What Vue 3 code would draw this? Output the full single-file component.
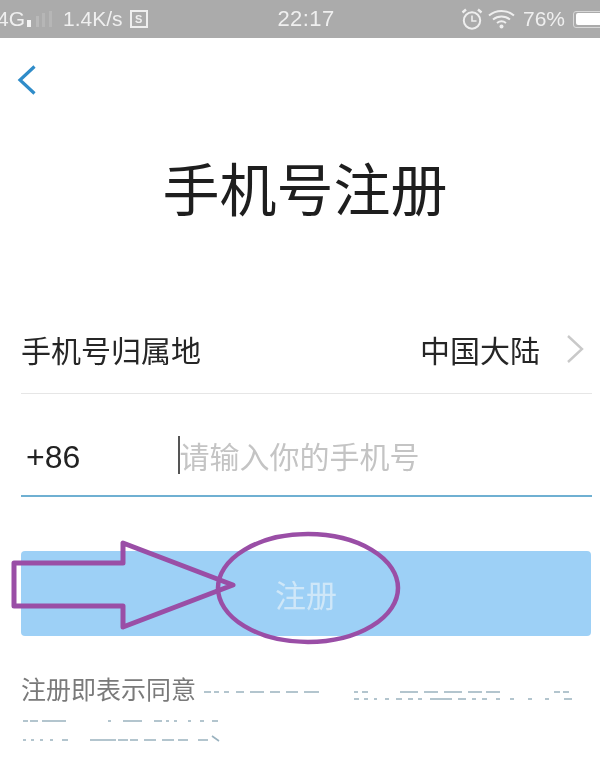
<script setup>
const footerDashes = [
  'M204 692h7M214 692h5M224 692h5M236 692h8M250 692h14M270 692h10M286 692h12M304 692h15M354 692h4M362 692h6M400 692h18M424 692h14M444 692h18M468 692h14M486 692h14M554 692h6M563 692h6',
  'M354 699h5M364 699h4M374 699h3M385 699h4M396 699h6M408 699h5M418 699h4M430 699h22M458 699h8M472 699h4M482 699h5M496 699h4M510 699h4M528 699h4M545 699h4M564 699h8',
  'M23 721h5M30 721h8M42 721h24M108 721h3M123 721h19M154 721h8M166 721h3M174 721h3M188 721h3M200 721h4M212 721h6',
  'M23 740h3M31 740h3M40 740h3M50 740h3M62 740h6M90 740h26M118 740h10M130 740h8M144 740h12M162 740h12M178 740h10M198 740h10M212 736l7 5'
]
</script>

<template>
  <div class="screen">
    <header class="status">
      <div class="status-left">
        <span class="net">4G</span>
        <svg class="signal" width="26" height="16" viewBox="0 0 26 16" aria-hidden="true">
          <rect x="0" y="9" width="4" height="7" fill="#f4f4f4" />
          <rect x="9" y="5" width="3" height="11" fill="#b9b9b9" />
          <rect x="15" y="2" width="3" height="14" fill="#b6b6b6" />
          <rect x="22" y="0" width="3" height="16" fill="#b6b6b6" />
        </svg>
        <span class="speed">1.4K/s</span>
        <span class="s-box">S</span>
      </div>
      <span class="clock">22:17</span>
      <div class="status-right">
        <svg width="22" height="22" viewBox="0 0 22 22" fill="none" stroke="#eeeeee" stroke-width="2" aria-hidden="true">
          <circle cx="11" cy="12.5" r="8.2" />
          <path d="M11 7.5v5.5h4.5" stroke-width="1.6" />
          <path d="M1.5 4.5l3.5-3M20.5 4.5l-3.5-3" stroke-width="2.4" />
        </svg>
        <svg class="wifi" width="27" height="20" viewBox="0 0 27 20" fill="none" stroke="#eeeeee" stroke-width="2" aria-hidden="true">
          <path d="M1 6.5C8 .5 19 .5 26 6.5" />
          <path d="M5 10.5C10 6.5 17 6.5 22 10.5" />
          <path d="M9 14c3-2.3 6-2.3 9 0" />
          <circle cx="13.5" cy="17.5" r="2" fill="#eeeeee" stroke="none" />
        </svg>
        <span class="pct">76%</span>
        <span class="battery"><span class="battery-fill"></span></span>
      </div>
    </header>

    <main class="page">
      <button class="back" aria-label="返回">
        <svg width="20" height="30" viewBox="0 0 20 30" fill="none" stroke="#2f8cc9" stroke-width="3.2" aria-hidden="true">
          <path d="M17.5 1.5L3 15l14.5 13.5" />
        </svg>
      </button>

      <h1 class="title">手机号注册</h1>

      <div class="row region">
        <span>手机号归属地</span>
        <span class="region-value">
          中国大陆
          <svg width="18" height="30" viewBox="0 0 18 30" fill="none" stroke="#c9c9c9" stroke-width="2.4" aria-hidden="true">
            <path d="M2 2l14 13L2 28" />
          </svg>
        </span>
      </div>

      <div class="row phone">
        <span class="code">+86</span>
        <span class="caret"></span>
        <span class="placeholder">请输入你的手机号</span>
      </div>

      <div class="submit-wrap">
        <button class="submit">注册</button>
        <svg class="mark" width="420" height="125" viewBox="0 0 420 125" fill="none" stroke="#9a4ea6" aria-hidden="true">
          <path d="M123 12v20H14v43h109v21l110-42z" stroke-width="5" stroke-linejoin="round" />
          <ellipse cx="308" cy="57" rx="90" ry="54" stroke-width="4.5" />
        </svg>
      </div>

      <div class="footer">
        <p class="agree">注册即表示同意</p>
        <svg class="smudge" width="600" height="90" viewBox="0 680 600 90" fill="none" stroke="#9ab2bf" stroke-width="1.6" aria-hidden="true">
          <path v-for="d in footerDashes" :key="d" :d="d" />
        </svg>
      </div>
    </main>
  </div>
</template>

<style scoped>
.screen {
  width: 600px;
  height: 773px;
  overflow: hidden;
  background: #fff;
  font-family: "Noto Sans CJK SC", "Liberation Sans", sans-serif;
  color: #222;
  filter: blur(0.5px);
}
.status {
  height: 38px;
  background: #ababab;
  color: #efefef;
  display: grid;
  grid-template-columns: 1fr auto 1fr;
  align-items: center;
  font-family: "Liberation Sans", sans-serif;
  font-size: 21px;
}
.status-left {
  display: flex;
  align-items: center;
  margin-left: -3px;
}
.net { margin-right: 2px; }
.signal { margin-right: 10px; }
.speed { margin-right: 7px; }
.s-box {
  width: 18px;
  height: 18px;
  border: 2px solid #efefef;
  box-sizing: border-box;
  font-size: 11px;
  font-weight: 700;
  display: flex;
  align-items: center;
  justify-content: center;
}
.clock { font-size: 22px; letter-spacing: 0.4px; margin-left: 12px; }
.status-right {
  display: flex;
  align-items: center;
  justify-content: flex-end;
  gap: 8px;
}
.wifi { margin-left: -3px; }
.pct { font-size: 21px; }
.battery {
  width: 36px;
  height: 17px;
  border: 1.5px solid #d8d8d8;
  border-radius: 3px;
  box-sizing: border-box;
  padding: 1.5px;
  margin-right: -9px;
  flex: none;
  display: flex;
}
.battery-fill { flex: 1; background: #fff; border-radius: 2px; }
.page { position: relative; padding: 0 8px 0 21px; }
.back {
  display: block;
  margin: 27px 0 0 -4px;
  padding: 0;
  border: 0;
  background: none;
  height: 30px;
}
.title {
  margin: 61px 0 0 -21px;
  width: 610px;
  text-align: center;
  font-size: 57px;
  line-height: 60px;
  font-weight: 400;
  color: #1e1e1e;
}
.row {
  display: flex;
  align-items: center;
  box-sizing: border-box;
}
.region {
  margin-top: 96px;
  height: 82px;
  padding-bottom: 8px;
  font-size: 30px;
  justify-content: space-between;
  border-bottom: 1.5px solid #e6e6e6;
  color: #262626;
}
.region-value {
  display: flex;
  align-items: center;
  gap: 26px;
  margin-right: 8px;
  font-size: 30px;
}
.phone {
  height: 103px;
  padding-top: 20px;
  border-bottom: 2px solid #6fb0d2;
  padding-left: 5px;
}
.code {
  font-family: "Liberation Sans", sans-serif;
  font-size: 32px;
  line-height: 40px;
  padding-top: 4px;
  width: 152px;
  color: #222;
}
.caret {
  width: 1.5px;
  height: 38px;
  background: #555;
  flex: none;
}
.placeholder {
  font-size: 30px;
  color: #c4c4c4;
}
.submit-wrap {
  position: relative;
  margin-top: 54px;
}
.submit {
  display: block;
  width: 570px;
  height: 85px;
  border: 0;
  border-radius: 4px;
  background: #9dd0f6;
  color: #cfe7f8;
  font-family: inherit;
  font-size: 31px;
}
.mark {
  position: absolute;
  left: -21px;
  top: -20px;
}
.footer { position: relative; margin-top: 34px; }
.agree {
  margin: 0;
  font-size: 25px;
  line-height: 36px;
  color: #7a7a7a;
}
.smudge {
  position: absolute;
  left: -21px;
  top: 10px;
}
</style>
